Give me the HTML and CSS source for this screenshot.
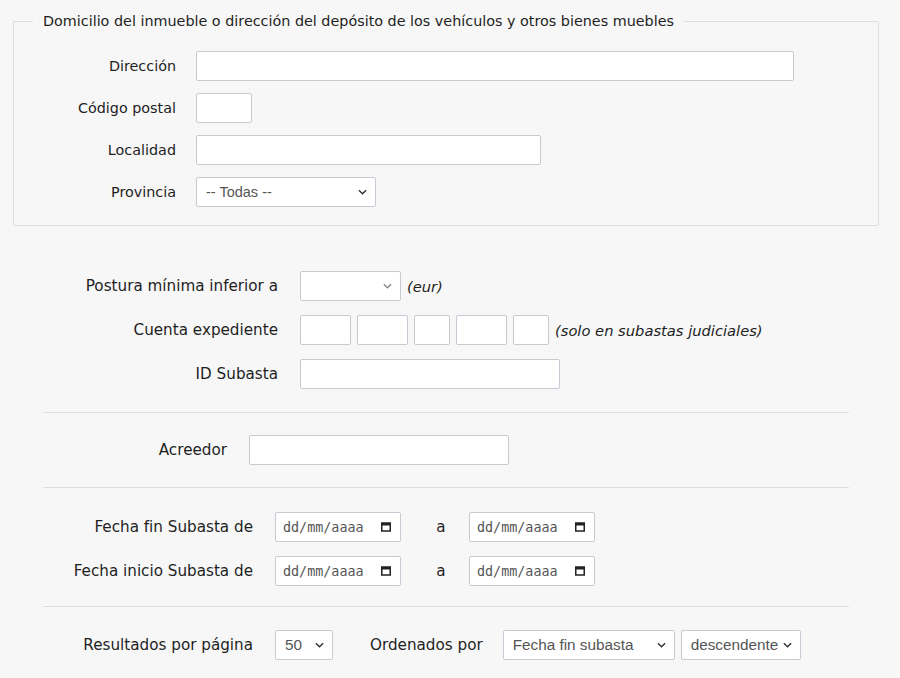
FILE: index.html
```html
<!DOCTYPE html>
<html lang="es">
<head>
<meta charset="utf-8">
<title>Búsqueda de subastas</title>
<link rel="stylesheet" href="styles.css">
</head>
<body>
<div class="page">
  <fieldset class="box">
    <legend class="box-legend">Domicilio del inmueble o dirección del depósito de los vehículos y otros bienes muebles</legend>
    <div class="grid grid-dom">
      <label class="lbl">Dirección</label>
      <div class="field"><input class="inp w-dir" type="text"></div>
      <label class="lbl">Código postal</label>
      <div class="field"><input class="inp w-cp" type="text"></div>
      <label class="lbl">Localidad</label>
      <div class="field"><input class="inp w-loc" type="text"></div>
      <label class="lbl">Provincia</label>
      <div class="field"><div class="sel w-prov"><span class="sel-text">-- Todas --</span><svg class="chev" viewBox="0 0 10 6" width="9" height="6"><path d="M1 1 L5 5 L9 1" fill="none" stroke="#333" stroke-width="1.6"/></svg></div></div>
    </div>
  </fieldset>

  <div class="section lower">
    <div class="grid grid-a">
      <label class="lbl">Postura mínima inferior a</label>
      <div class="field"><div class="sel w-post"><span class="sel-text"></span><svg class="chev" viewBox="0 0 10 6" width="9" height="6"><path d="M1 1 L5 5 L9 1" fill="none" stroke="#888" stroke-width="1.6"/></svg></div><span class="note">(eur)</span></div>
      <label class="lbl">Cuenta expediente</label>
      <div class="field cuenta"><input class="inp w-c1" type="text"><input class="inp w-c1" type="text"><input class="inp w-c3" type="text"><input class="inp w-c1" type="text"><input class="inp w-c3" type="text"><span class="note">(solo en subastas judiciales)</span></div>
      <label class="lbl">ID Subasta</label>
      <div class="field"><input class="inp w-id" type="text"></div>
    </div>
  </div>

  <hr class="sep sep-1">

  <div class="section lower">
    <div class="grid grid-b">
      <label class="lbl">Acreedor</label>
      <div class="field"><input class="inp w-id" type="text"></div>
    </div>
  </div>

  <hr class="sep sep-2">

  <div class="section lower">
    <div class="grid grid-c">
      <label class="lbl">Fecha fin Subasta de</label>
      <div class="field">
        <div class="date"><span>dd/mm/aaaa</span><svg class="cal" viewBox="0 0 10 10" width="10" height="10"><rect x="0.75" y="1" width="8.5" height="8" fill="none" stroke="#222" stroke-width="1.5"/><rect x="0.75" y="1" width="8.5" height="2.5" fill="#222"/></svg></div>
        <span class="to">a</span>
        <div class="date"><span>dd/mm/aaaa</span><svg class="cal" viewBox="0 0 10 10" width="10" height="10"><rect x="0.75" y="1" width="8.5" height="8" fill="none" stroke="#222" stroke-width="1.5"/><rect x="0.75" y="1" width="8.5" height="2.5" fill="#222"/></svg></div>
      </div>
      <label class="lbl">Fecha inicio Subasta de</label>
      <div class="field">
        <div class="date"><span>dd/mm/aaaa</span><svg class="cal" viewBox="0 0 10 10" width="10" height="10"><rect x="0.75" y="1" width="8.5" height="8" fill="none" stroke="#222" stroke-width="1.5"/><rect x="0.75" y="1" width="8.5" height="2.5" fill="#222"/></svg></div>
        <span class="to">a</span>
        <div class="date"><span>dd/mm/aaaa</span><svg class="cal" viewBox="0 0 10 10" width="10" height="10"><rect x="0.75" y="1" width="8.5" height="8" fill="none" stroke="#222" stroke-width="1.5"/><rect x="0.75" y="1" width="8.5" height="2.5" fill="#222"/></svg></div>
      </div>
    </div>
  </div>

  <hr class="sep sep-3">

  <div class="section lower">
    <div class="grid grid-c">
      <label class="lbl">Resultados por página</label>
      <div class="field">
        <div class="sel w-res"><span class="sel-text">50</span><svg class="chev" viewBox="0 0 10 6" width="9" height="6"><path d="M1 1 L5 5 L9 1" fill="none" stroke="#333" stroke-width="1.6"/></svg></div>
        <span class="lbl ord">Ordenados por</span>
        <div class="sel w-ord"><span class="sel-text">Fecha fin subasta</span><svg class="chev" viewBox="0 0 10 6" width="9" height="6"><path d="M1 1 L5 5 L9 1" fill="none" stroke="#333" stroke-width="1.6"/></svg></div>
        <div class="sel w-dir2"><span class="sel-text">descendente</span><svg class="chev" viewBox="0 0 10 6" width="9" height="6"><path d="M1 1 L5 5 L9 1" fill="none" stroke="#333" stroke-width="1.6"/></svg></div>
      </div>
    </div>
  </div>
</div>
</body>
</html>
```

FILE: styles.css
```css
html, body {
  margin: 0;
  padding: 0;
  background: #f7f7f7;
}
body {
  font-family: "DejaVu Sans", Verdana, sans-serif;
  font-size: 14.35px;
  color: #1e1e1e;
}
.page {
  padding: 12px 21px 0 13px;
}
.box {
  margin: 0;
  border: 1px solid #dcdee2;
  border-radius: 2px;
  padding: 21px 0 18px 0;
  min-width: 0;
}
.box-legend {
  margin-left: 19px;
  padding: 0 10px;
  font-size: 14.35px;
  line-height: 18px;
}
.grid {
  display: grid;
  align-items: center;
}
.grid-dom {
  grid-template-columns: 162px auto;
  column-gap: 20px;
  row-gap: 12px;
}
.lower {
  font-size: 15.2px;
}
.grid-a {
  grid-template-columns: 235px auto;
  column-gap: 22px;
  row-gap: 14px;
}
.grid-b {
  grid-template-columns: 184px auto;
  column-gap: 22px;
}
.grid-c {
  grid-template-columns: 210px auto;
  column-gap: 22px;
  row-gap: 14px;
}
.lbl {
  text-align: right;
  line-height: 18px;
  white-space: nowrap;
}
.field {
  display: flex;
  align-items: center;
}
.inp {
  box-sizing: border-box;
  height: 30px;
  margin: 0;
  border: 1px solid #c5cad3;
  border-radius: 2px;
  background: #fff;
  font: inherit;
  padding: 0 6px;
}
.w-dir { width: 598px; }
.w-cp { width: 56px; }
.w-loc { width: 345px; }
.w-id { width: 260px; }
.w-c1 { width: 51px; }
.w-c3 { width: 36px; }
.cuenta { gap: 6px; }
.cuenta .note { margin-left: 0; }
.sel {
  box-sizing: border-box;
  height: 30px;
  border: 1px solid #c5cad3;
  border-radius: 2px;
  background: #fff;
  display: flex;
  align-items: center;
  justify-content: space-between;
  padding: 0 8px 0 9px;
  font-family: "Liberation Sans", Arial, sans-serif;
  font-size: 15.3px;
  color: #555;
}
.w-prov { width: 180px; font-size: 14.5px; }
.w-post { width: 101px; }
.w-res { width: 58px; padding-left: 9px; }
.w-ord { width: 172px; }
.w-dir2 { width: 120px; margin-left: 6px; }
.chev { flex: none; }
.note {
  font-style: italic;
  font-size: 14.7px;
  margin-left: 6px;
}
.section {
  margin: 0 30px 0 30px;
}
.box + .section {
  margin-top: 45px;
}
.sep {
  margin: 22px 30px 22px 30px;
  border: 0;
  border-top: 1px solid #dedfe1;
  height: 0;
}
.sep-1 { margin-top: 23px; margin-bottom: 22px; }
.sep-2 { margin-top: 22px; margin-bottom: 24px; }
.sep-3 { margin-top: 20px; margin-bottom: 23px; }
.date {
  box-sizing: border-box;
  width: 126px;
  height: 30px;
  border: 1px solid #c5cad3;
  border-radius: 2px;
  background: #fff;
  display: flex;
  align-items: center;
  justify-content: space-between;
  padding: 0 9px 0 7px;
  font-family: "DejaVu Sans Mono", "Liberation Mono", monospace;
  font-size: 13.4px;
  color: #555;
}
.cal { flex: none; }
.to {
  width: 68px;
  text-align: center;
  padding-left: 12px;
  box-sizing: border-box;
}
.ord {
  margin-left: 37px;
  margin-right: 20px;
}
```
